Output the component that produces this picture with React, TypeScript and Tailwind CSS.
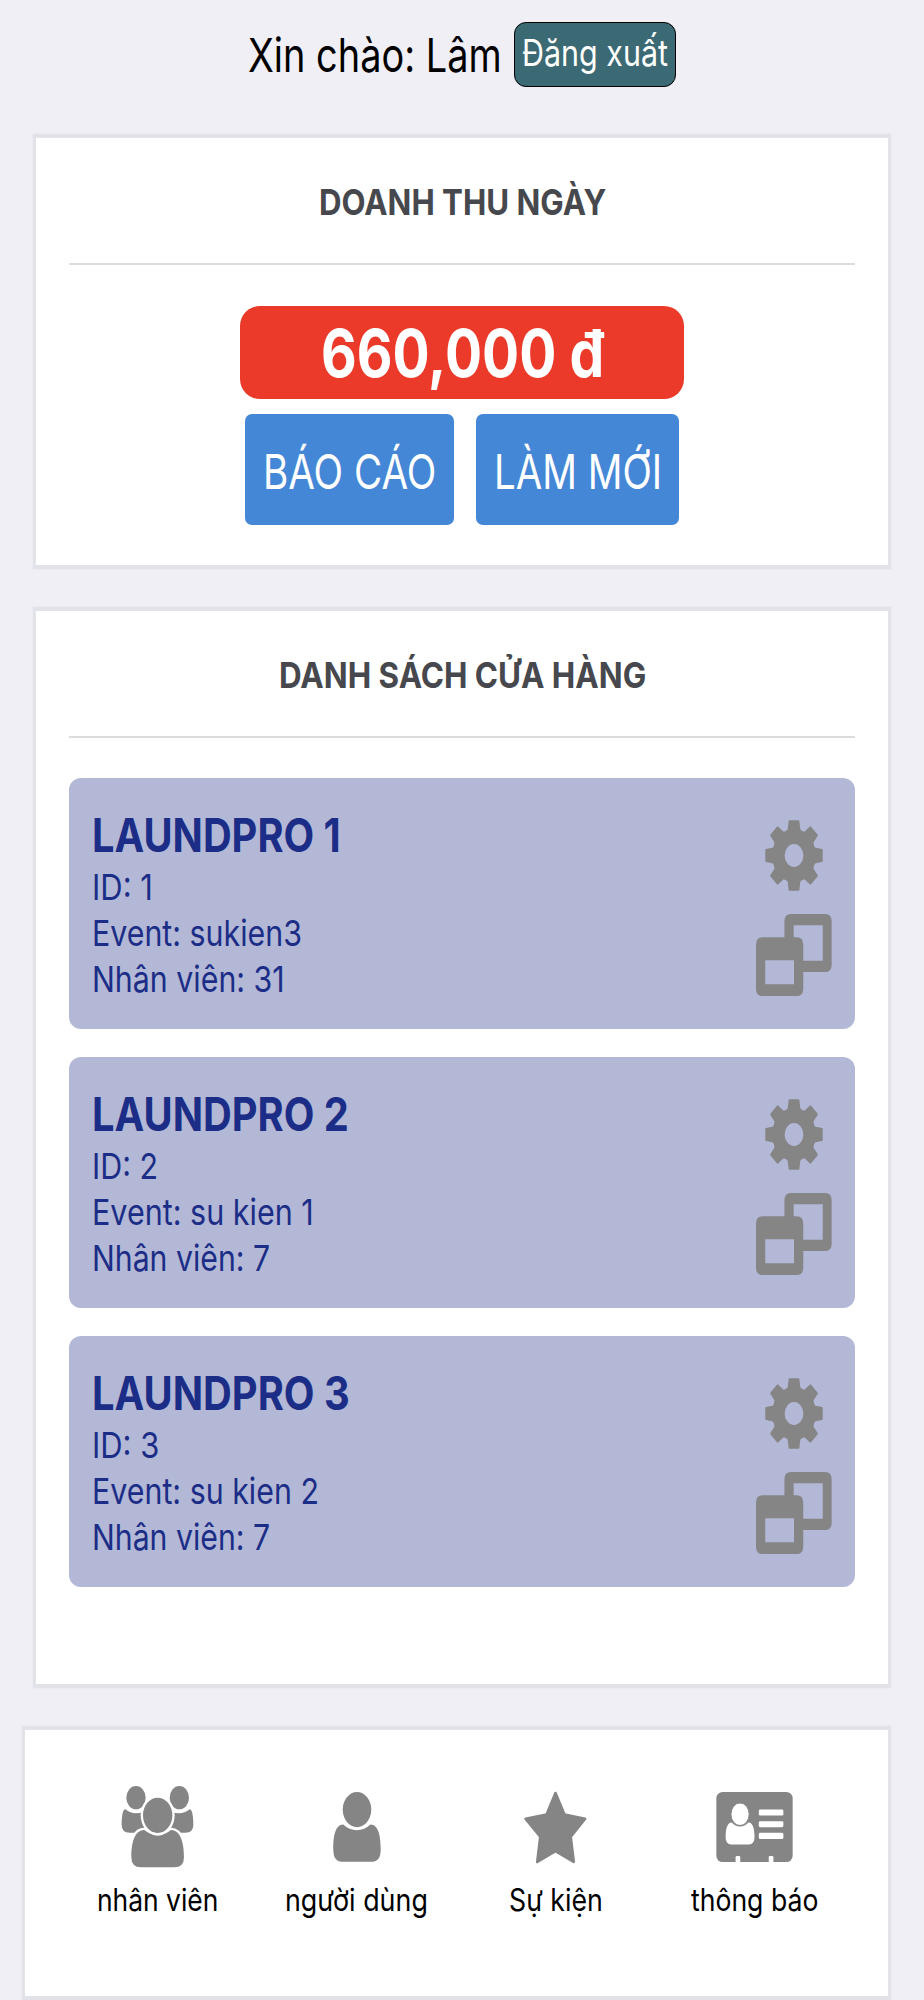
import React, { useLayoutEffect, useRef, useState } from "react";
import clsx from "clsx";

interface Store {
  name: string;
  id: number;
  event: string;
  staff: number;
  // widths of the four text lines
  widths: [string, string, string, string];
}

const stores: Store[] = [
  {
    name: "LAUNDPRO 1",
    id: 1,
    event: "sukien3",
    staff: 31,
    widths: ["w-[249px]", "w-[61px]", "w-[210px]", "w-[193px]"],
  },
  {
    name: "LAUNDPRO 2",
    id: 2,
    event: "su kien 1",
    staff: 7,
    widths: ["w-[257px]", "w-[66px]", "w-[222px]", "w-[178px]"],
  },
  {
    name: "LAUNDPRO 3",
    id: 3,
    event: "su kien 2",
    staff: 7,
    widths: ["w-[258px]", "w-[67px]", "w-[227px]", "w-[178px]"],
  },
];

interface FitTextProps {
  className?: string;
  children: React.ReactNode;
}

// Condenses a single line of text to the width of its box
const FitText: React.FC<FitTextProps> = ({ className, children }) => {
  const boxRef = useRef<HTMLDivElement>(null);
  const textRef = useRef<HTMLSpanElement>(null);
  const [scale, setScale] = useState(1);

  useLayoutEffect(() => {
    if (boxRef.current && textRef.current) {
      setScale(boxRef.current.offsetWidth / textRef.current.offsetWidth);
    }
  }, [children]);

  return (
    <div ref={boxRef} className={clsx("shrink-0", className)}>
      <span
        ref={textRef}
        className="inline-block origin-left whitespace-nowrap align-top"
        style={{ transform: `scaleX(${scale})` }}
      >
        {children}
      </span>
    </div>
  );
};

const GearIcon = () => (
  <svg
    viewBox="-102 -102 204 204"
    preserveAspectRatio="none"
    className="h-[71px] w-[58px]"
  >
    <circle r="54.5" fill="none" stroke="#858585" strokeWidth="43" />
    <g fill="#858585" stroke="#858585" strokeWidth="6" strokeLinejoin="round">
      {[0, 45, 90, 135, 180, 225, 270, 315].map((angle) => (
        <path
          key={angle}
          d="M-16 -98 L-19 -76 Q-20 -71 -25 -69 H25 Q20 -71 19 -76 L16 -98 Z"
          transform={`rotate(${angle})`}
        />
      ))}
    </g>
  </svg>
);

const WindowsIcon = () => (
  <svg
    viewBox="107 461 230 246"
    preserveAspectRatio="none"
    className="h-[82px] w-[76px]"
    fill="#858585"
  >
    <path d="M193 540V483Q193 461 213 461H316Q336 461 336 483V613Q336 635 316 635H245V601H309V495H221V540Z" />
    <path
      fillRule="evenodd"
      d="M127 531H230Q250 531 250 553V685Q250 707 230 707H127Q107 707 107 685V553Q107 531 127 531ZM135 600V672H222V600Z"
    />
  </svg>
);

const StaffIcon = () => (
  <svg viewBox="363 377 217 246" className="h-[82px] w-[73px]" fill="#858585">
    <ellipse cx="407" cy="412" rx="29" ry="35" />
    <ellipse cx="537" cy="412" rx="29" ry="35" />
    <path d="M375 447Q390 459 407 459Q417 459 432 455V517H388Q364 517 364 494C364 470 367 447 375 447Z" />
    <path d="M568 447Q553 459 536 459Q526 459 511 455V517H555Q579 517 579 494C579 470 576 447 568 447Z" />
    <path
      d="M432 509Q450 524 472 524Q494 524 512 509C545 509 551 560 551 590Q551 621 522 621H422Q393 621 393 590C393 560 398 509 432 509Z"
      stroke="#fff"
      strokeWidth="14"
      paintOrder="stroke"
    />
    <ellipse cx="472" cy="465" rx="51" ry="61" fill="#fff" />
    <ellipse cx="472" cy="465" rx="44" ry="53" />
  </svg>
);

const UserIcon = () => (
  <svg viewBox="998 394 143 211" className="h-[70px] w-[48px]" fill="#858585">
    <path d="M1028 492Q1046 509 1069 509Q1092 509 1110 492C1135 492 1141 530 1141 566Q1141 604 1116 604H1023Q998 604 998 566C998 530 1003 492 1028 492Z" />
    <ellipse cx="1069.500" cy="447" rx="43" ry="53" />
  </svg>
);

const StarIcon = () => (
  <svg viewBox="194 380 190 220" className="h-[73px] w-[63px]">
    <path
      d="M289 386L316 451L378 464L335 518L344 594L289 561L234 594L243 518L199 464L262 451Z"
      fill="#858585"
      stroke="#858585"
      strokeWidth="8"
      strokeLinejoin="round"
    />
  </svg>
);

const CardIcon = () => (
  <svg viewBox="769 394 230 211" className="h-[70px] w-[77px]">
    <rect x="769" y="394" width="230" height="211" rx="19" fill="#858585" />
    <g fill="#fff">
      <path d="M815 486Q826 498 840 498Q855 498 866 486C880 486 884 508 884 530Q884 552 869 552H812Q797 552 797 530C797 508 801 486 815 486Z" />
      <ellipse
        cx="840.500"
        cy="461"
        rx="27.500"
        ry="34"
        stroke="#858585"
        strokeWidth="3"
      />
      <rect x="897" y="447" width="74" height="18" rx="4" />
      <rect x="897" y="482" width="74" height="18" rx="4" />
      <rect x="897" y="517" width="74" height="19" rx="4" />
      <path d="M827 606V591Q827 587 831 587H837Q841 587 841 591V606Z" />
      <path d="M927 606V591Q927 587 931 587H937Q941 587 941 591V606Z" />
    </g>
  </svg>
);

const menu = [
  { label: "nhân viên", width: "w-[121px]", Icon: StaffIcon },
  { label: "người dùng", width: "w-[143px]", Icon: UserIcon },
  { label: "Sự kiện", width: "w-[94px]", Icon: StarIcon },
  { label: "thông báo", width: "w-[127px]", Icon: CardIcon },
];

interface PanelProps {
  title: string;
  titleWidth: string;
  className?: string;
  children: React.ReactNode;
}

const Panel: React.FC<PanelProps> = ({
  title,
  titleWidth,
  className,
  children,
}) => (
  <section
    className={clsx(
      "ml-[33px] w-[858px] border-x-[3px] border-y-[4px] border-[#e2e2e9] bg-white px-[33px] shadow-[0_0_2px_#e2e2e9]",
      className
    )}
  >
    <div className="flex h-[127px] justify-center border-b-2 border-[#dcdcdd] pt-1">
      <h2 className="text-[36px] leading-[121px] font-bold text-[#46484d]">
        <FitText className={titleWidth}>{title}</FitText>
      </h2>
    </div>
    {children}
  </section>
);

const StoreCard: React.FC<{ store: Store }> = ({ store }) => (
  <div className="flex h-[251px] justify-between rounded-[12px] bg-[#b3b8d6] pr-[23px] pl-[23px] text-[#1b2d86]">
    <div className="pt-7 text-[36px] leading-[46px]">
      <h3 className="text-[46.5px] leading-[58px] font-bold">
        <FitText className={store.widths[0]}>{store.name}</FitText>
      </h3>
      <FitText className={store.widths[1]}>ID: {store.id}</FitText>
      <FitText className={store.widths[2]}>Event: {store.event}</FitText>
      <FitText className={store.widths[3]}>Nhân viên: {store.staff}</FitText>
    </div>
    <div className="flex flex-col items-center gap-[23px] pt-[42px]">
      <GearIcon />
      <WindowsIcon />
    </div>
  </div>
);

const App: React.FC = () => {
  return (
    <div className="h-[2000px] w-[924px] overflow-hidden bg-[#f0eff5] font-['Inter',sans-serif]">
      <header className="flex h-[109px] items-center pl-[248px]">
        <FitText className="w-[254px] text-[47px] leading-[60px] text-black">
          Xin chào: Lâm
        </FitText>
        <button className="ml-3 flex h-[65px] w-[162px] justify-center rounded-[12px] border-[1.5px] border-black bg-[#3c6a74] text-[36.5px] leading-[61px] text-white">
          <FitText className="w-[146px] text-left">Đăng xuất</FitText>
        </button>
      </header>

      <Panel
        title="DOANH THU NGÀY"
        titleWidth="w-[287px]"
        className="mt-[25px] h-[435px]"
      >
        <div className="mt-[41px] flex flex-col items-center text-white">
          <div className="flex h-[93px] w-[444px] justify-center rounded-[20px] bg-[#eb3a29] text-[66px] leading-[95px] font-bold">
            <FitText className="w-[283px]">660,000 đ</FitText>
          </div>
          <div className="mt-[15px] flex gap-[22px] text-[48px] leading-[115px]">
            <button className="flex h-[111px] w-[209px] justify-center rounded-[7px] bg-[#4487d6]">
              <FitText className="w-[173px] text-left">BÁO CÁO</FitText>
            </button>
            <button className="flex h-[111px] w-[203px] justify-center rounded-[7px] bg-[#4487d6]">
              <FitText className="w-[168px] text-left">LÀM MỚI</FitText>
            </button>
          </div>
        </div>
      </Panel>

      <Panel
        title="DANH SÁCH CỬA HÀNG"
        titleWidth="w-[367px]"
        className="mt-[38px] h-[1081px]"
      >
        <div className="mt-[40px] flex flex-col gap-7">
          {stores.map((store) => (
            <StoreCard key={store.id} store={store} />
          ))}
        </div>
      </Panel>

      <nav className="mt-[38px] ml-[22px] grid h-[274px] w-[869px] grid-cols-[repeat(4,199px)] border-x-[3px] border-y-[4px] border-[#e2e2e9] bg-white pt-[51px] pl-[33px] shadow-[0_0_2px_#e2e2e9]">
        {menu.map(({ label, width, Icon }) => (
          <a key={label} className="flex flex-col items-center text-black">
            <div className="flex h-[92px] items-center">
              <Icon />
            </div>
            <div className="pt-[7px] text-[31px] leading-[40px]">
              <FitText className={width}>{label}</FitText>
            </div>
          </a>
        ))}
      </nav>
    </div>
  );
};

export default App;
